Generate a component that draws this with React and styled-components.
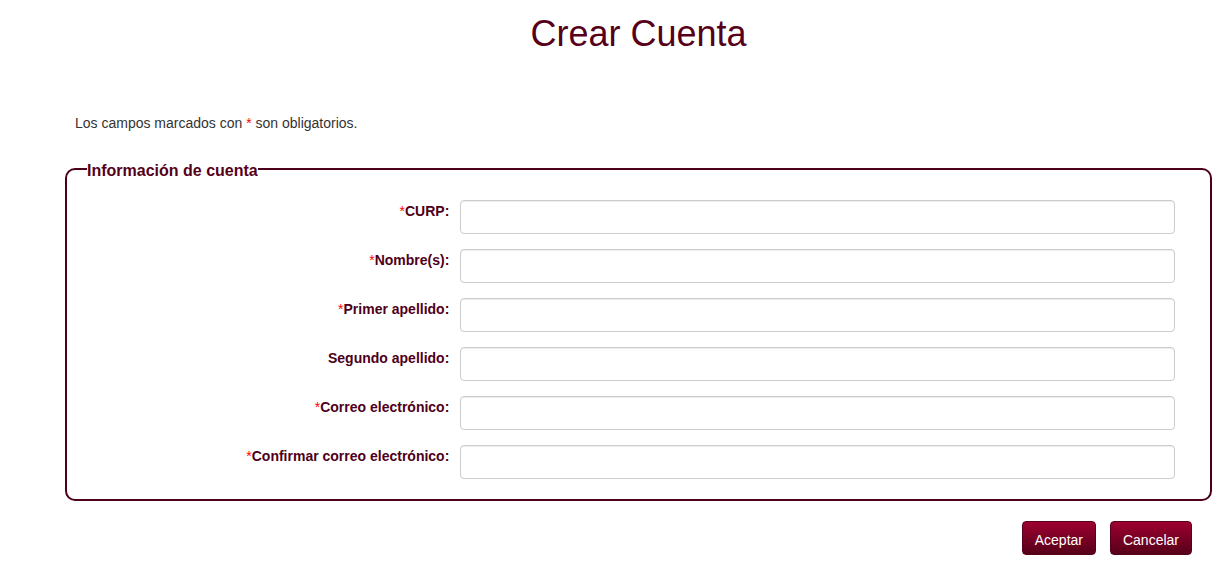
import React from "react";
import styled, { createGlobalStyle } from "styled-components";

const GlobalStyle = createGlobalStyle`
  * { box-sizing: border-box; }
  body {
    margin: 0;
    background: #fff;
    color: #333;
    font-family: "Liberation Sans", Arial, sans-serif;
    font-size: 14px;
    line-height: 20px;
  }
`;

const Page = styled.main`
  padding: 14px 20px 12px 65px;
`;

const Title = styled.h1`
  margin: 0;
  color: #56001a;
  font-size: 36px;
  font-weight: 400;
  line-height: 40px;
  text-align: center;
`;

const Note = styled.p`
  margin: 59px 0 24px;
  padding-left: 10px;
`;

const Required = styled.span`
  color: #f00;
  font-weight: 400;
`;

const FieldGroup = styled.fieldset`
  margin: 0;
  min-width: 0;
  padding: 19px 35px 20px 20px;
  border: 2px solid #4d0019;
  border-radius: 10px;
`;

const Legend = styled.legend`
  padding: 4px 0 0;
  color: #56001a;
  font-size: 16px;
  font-weight: 700;
  line-height: 20px;
`;

const Rows = styled.div`
  display: grid;
  gap: 15px;
  padding-left: 5px;
`;

const Row = styled.div`
  display: grid;
  grid-template-columns: minmax(0, 1fr) minmax(0, 2fr);
  column-gap: 11px;
`;

const Label = styled.label`
  padding-top: 1px;
  color: #4d0019;
  font-weight: 700;
  text-align: right;
`;

const TextInput = styled.input`
  width: 100%;
  height: 34px;
  padding: 6px 12px;
  border: 1px solid #ccc;
  border-radius: 4px;
  background: #fff;
  box-shadow: inset 0 1px 1px rgba(0, 0, 0, 0.075);
  color: #555;
  font: inherit;
`;

const Actions = styled.div`
  display: flex;
  justify-content: flex-end;
  gap: 14px;
  padding: 20px 20px 0 0;
`;

const Button = styled.button`
  height: 34px;
  padding: 4px 12px 0;
  border: 1px solid #56001a;
  border-radius: 4px;
  background: linear-gradient(#9d002f, #56001a);
  color: #fff;
  font: inherit;
  cursor: pointer;
`;

const fields = [
  { id: "curp", label: "CURP:", required: true },
  { id: "nombre", label: "Nombre(s):", required: true },
  { id: "primer-apellido", label: "Primer apellido:", required: true },
  { id: "segundo-apellido", label: "Segundo apellido:", required: false },
  { id: "correo", label: "Correo electrónico:", required: true, type: "email" },
  { id: "confirmar-correo", label: "Confirmar correo electrónico:", required: true, type: "email" },
];

export default function App() {
  return (
    <Page>
      <GlobalStyle />
      <Title>Crear Cuenta</Title>
      <Note>
        Los campos marcados con <Required>*</Required> son obligatorios.
      </Note>
      <form noValidate onSubmit={(event) => event.preventDefault()}>
        <FieldGroup>
          <Legend>Información de cuenta</Legend>
          <Rows>
            {fields.map(({ id, label, required, type = "text" }) => (
              <Row key={id}>
                <Label htmlFor={id}>
                  {required && <Required>*</Required>}
                  {label}
                </Label>
                <TextInput id={id} name={id} type={type} required={required} />
              </Row>
            ))}
          </Rows>
        </FieldGroup>
        <Actions>
          <Button type="submit">Aceptar</Button>
          <Button type="button">Cancelar</Button>
        </Actions>
      </form>
    </Page>
  );
}
